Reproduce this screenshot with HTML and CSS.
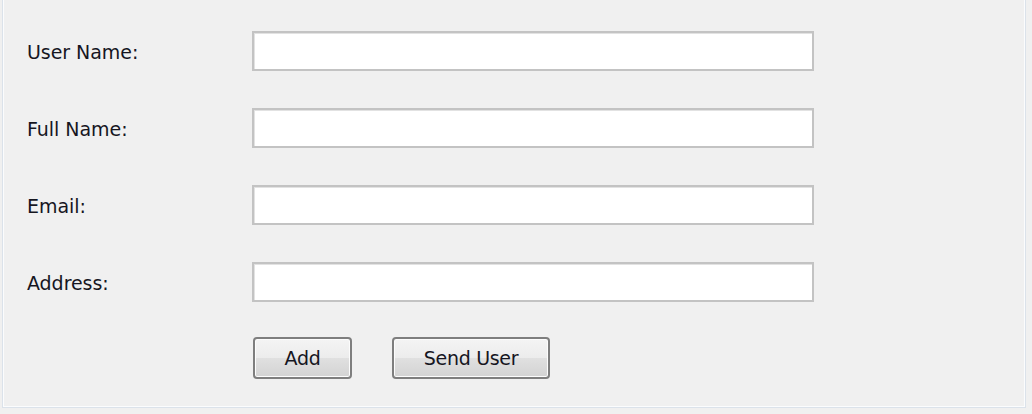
FILE: index.html
```html
<!DOCTYPE html>
<html>
<head>
<meta charset="utf-8">
<link rel="stylesheet" href="styles.css">
</head>
<body>
<div class="panel">
  <form class="form">
    <label class="label">User Name:</label>
    <input class="field" type="text">
    <label class="label">Full Name:</label>
    <input class="field" type="text">
    <label class="label">Email:</label>
    <input class="field" type="text">
    <label class="label">Address:</label>
    <input class="field" type="text">
    <div class="buttons">
      <button type="button" class="btn btn-add">Add</button>
      <button type="button" class="btn btn-send">Send User</button>
    </div>
  </form>
</div>
</body>
</html>
```
FILE: styles.css
```css
html, body {
  margin: 0;
  padding: 0;
  background: #f0f0f0;
}
body {
  width: 1032px;
  height: 414px;
  overflow: hidden;
  font-family: "DejaVu Sans", sans-serif;
}
.panel {
  margin-left: 2px;
  width: 1024px;
  height: 408px;
  box-sizing: border-box;
  border: 1px solid #dbe2ea;
  border-top: none;
  box-shadow: inset 1px 0 0 #fbfcfd, inset -1px 0 0 #fbfcfd, inset 0 -1px 0 #fbfcfd;
  padding: 31px 0 0 24px;
}
.form {
  display: grid;
  grid-template-columns: 225px 562px;
  grid-auto-rows: 40px;
  row-gap: 37px;
  align-items: center;
  margin: 0;
}
.label {
  font-size: 19px;
  color: #16161f;
  letter-spacing: -0.05px;
  padding-top: 1px;
}
.field {
  box-sizing: border-box;
  width: 562px;
  height: 40px;
  margin: 0;
  background: #fff;
  border: 2px solid #c3c3c3;
  border-radius: 0;
  outline: none;
  box-shadow: inset 1px 1px 0 #e2e2e2;
}
.buttons {
  grid-column: 2;
  display: flex;
  gap: 40px;
  margin-top: -2px;
  padding-left: 1px;
  height: 42px;
  align-self: start;
}
.btn {
  box-sizing: border-box;
  height: 42px;
  margin: 0;
  padding: 0;
  font-family: inherit;
  font-size: 19px;
  letter-spacing: -0.3px;
  color: #16161f;
  border: 2px solid #7e7e7e;
  border-radius: 4px;
  background: linear-gradient(#f4f4f4 0%, #ececec 50%, #e0e0e0 51%, #d3d3d3 100%);
  box-shadow: inset 0 0 0 1px #fcfcfc;
}
.btn-add { width: 99px; }
.btn-send { width: 158px; }
```
